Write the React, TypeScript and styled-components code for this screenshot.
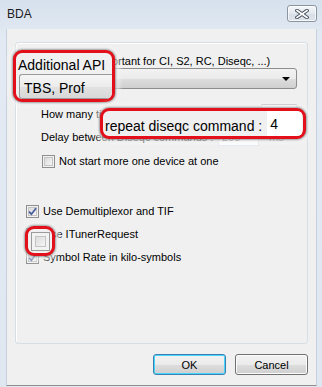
import styled, { createGlobalStyle } from 'styled-components';

const GlobalStyle = createGlobalStyle`
    html, body {
        margin: 0;
        padding: 0;
        background: #dde6f0;
    }
    body {
        font-family: 'Liberation Sans', Arial, sans-serif;
        font-size: 11px;
        color: #000;
    }
`;

function Check({ checked, big }: { checked?: boolean; big?: boolean }) {
    return (
        <CheckBox $big={big}>
            {checked && (
                <svg width="9" height="9" viewBox="0 0 9 9">
                    <path d="M1 4.6 L3.4 7.2 L8 1.2" fill="none" stroke="#4a5e9c" strokeWidth="1.8" />
                </svg>
            )}
        </CheckBox>
    );
}

export default function App() {
    return (
        <>
            <GlobalStyle />
            <Window>
                <TitleBar>
                    <Title>BDA</Title>
                    <CloseButton>
                        <svg width="14" height="10" viewBox="0 0 14 10">
                            <path d="M2 1.5 L12 8.5 M12 1.5 L2 8.5" stroke="#4d5560" strokeWidth="3.6" strokeLinecap="square" />
                            <path d="M2 1.5 L12 8.5 M12 1.5 L2 8.5" stroke="#fff" strokeWidth="1.6" strokeLinecap="square" />
                        </svg>
                    </CloseButton>
                </TitleBar>
                <Body>
                    <GroupBox>
                        <Row $top={11} $indent={0} $h={14}>
                            Additional API (important for CI, S2, RC, Diseqc, ...)
                        </Row>
                        <Combo>
                            <span>TBS, Prof</span>
                            <ComboArrow />
                        </Combo>
                        <Row $top={15} $indent={22} $h={19}>
                            <span>How many times to repeat diseqc command :</span>
                            <TextBox $w={39} $push>
                                4
                            </TextBox>
                        </Row>
                        <Row $top={4} $indent={22} $h={19}>
                            <Caption $w={177}>Delay between Diseqc commands :</Caption>
                            <TextBox $w={41}>200</TextBox>
                            <Unit>ms</Unit>
                        </Row>
                        <Row $top={8} $indent={23} $h={14}>
                            <Check />
                            <CheckText>Not start more one device at one</CheckText>
                        </Row>
                        <Row $top={36} $indent={7} $h={14}>
                            <Check checked />
                            <CheckText>Use Demultiplexor and TIF</CheckText>
                        </Row>
                        <Row $top={9} $indent={7} $h={14}>
                            <Check />
                            <CheckText>Use ITunerRequest</CheckText>
                        </Row>
                        <Row $top={9} $indent={7} $h={14}>
                            <Check checked />
                            <CheckText>Symbol Rate in kilo-symbols</CheckText>
                        </Row>
                    </GroupBox>
                    <ButtonBar>
                        <Button $default>OK</Button>
                        <Button>Cancel</Button>
                    </ButtonBar>
                </Body>

                {/* magnified callouts laid over the dialog */}
                <Callout $x={13} $y={50} $w={102} $h={52} $dir="column">
                    <ZoomText>Additional API</ZoomText>
                    <ZoomCombo>TBS, Prof</ZoomCombo>
                </Callout>
                <Callout $x={100} $y={108} $w={206} $h={31} $dir="row">
                    <ZoomText>repeat diseqc command :</ZoomText>
                    <ZoomInput>4</ZoomInput>
                </Callout>
                <Callout $x={25} $y={226} $w={30} $h={30} $dir="row" $center>
                    <Check big />
                </Callout>
            </Window>
        </>
    );
}

const gradient = 'linear-gradient(#f2f2f2, #ebebeb 50%, #dddddd 51%, #cfcfcf)';

const Window = styled.div`
    position: relative;
    width: 322px;
    height: 387px;
    box-sizing: border-box;
    display: flex;
    flex-direction: column;
    padding: 0 5px 1px 6px;
    background: linear-gradient(#d6e1ed, #e3eaf3 40px, #dfe7f0);
    overflow: hidden;
`;

const TitleBar = styled.div`
    height: 29px;
    display: flex;
    align-items: center;
    justify-content: space-between;
    padding-left: 1px;
    flex-shrink: 0;
`;

const Title = styled.div`
    font-size: 12px;
    color: #1b1b1b;
    margin-top: -1px;
`;

const CloseButton = styled.div`
    width: 28px;
    height: 15px;
    margin-top: -2px;
    border: 1px solid #8b95a1;
    border-radius: 3px;
    background: linear-gradient(#f5f7fa, #e3e8ee 50%, #d6dde6 51%, #dfe5ec);
    display: flex;
    align-items: center;
    justify-content: center;
    box-shadow: inset 0 0 0 1px rgba(255, 255, 255, 0.7);
`;

const Body = styled.div`
    flex: 1;
    background: #f0f0f0;
    border: 1px solid #c5d1de;
    border-top: none;
    border-bottom-color: #8e8e8e;
    display: flex;
    flex-direction: column;
    padding: 13px 8px 0 8px;
`;

const GroupBox = styled.div`
    height: 302px;
    box-sizing: border-box;
    border: 1px solid #d5dfe5;
    border-radius: 3px;
    box-shadow: inset 1px 1px 0 #fff;
    padding: 0 10px 0 3px;
    display: flex;
    flex-direction: column;
`;

const Row = styled.div<{ $top: number; $indent: number; $h: number }>`
    display: flex;
    align-items: center;
    margin-top: ${({ $top }) => $top}px;
    padding-left: ${({ $indent }) => $indent}px;
    height: ${({ $h }) => $h}px;
    white-space: nowrap;
`;

const Caption = styled.span<{ $w: number }>`
    width: ${({ $w }) => $w}px;
    flex-shrink: 0;
`;

const Combo = styled.div`
    height: 21px;
    box-sizing: border-box;
    border: 1px solid #8d8d8d;
    border-radius: 3px;
    background: ${gradient};
    display: flex;
    align-items: center;
    justify-content: space-between;
    padding: 0 6px 0 4px;
`;

const ComboArrow = styled.span`
    width: 0;
    height: 0;
    border-left: 4px solid transparent;
    border-right: 4px solid transparent;
    border-top: 4px solid #000;
`;

const TextBox = styled.div<{ $w: number; $push?: boolean }>`
    width: ${({ $w }) => $w}px;
    height: 19px;
    box-sizing: border-box;
    margin-left: ${({ $push }) => ($push ? 'auto' : '0')};
    border: 1px solid;
    border-color: #abadb3 #dbdfe6 #e3e9ef #e2e3ea;
    background: #fff;
    padding-left: 3px;
    display: flex;
    align-items: center;
    color: #6d6d6d;
`;

const Unit = styled.span`
    margin-left: 10px;
    color: #6d6d6d;
`;

const CheckBox = styled.span<{ $big?: boolean }>`
    width: ${({ $big }) => ($big ? 19 : 13)}px;
    height: ${({ $big }) => ($big ? 19 : 13)}px;
    box-sizing: border-box;
    flex-shrink: 0;
    border: 1px solid ${({ $big }) => ($big ? '#9b9b9b' : '#8e8f8f')};
    background: linear-gradient(135deg, #d2d2d2, #f1f1f1 70%, #ffffff);
    box-shadow: inset 0 0 0 ${({ $big }) => ($big ? 3 : 1)}px #f2f2f2,
        inset 0 0 0 ${({ $big }) => ($big ? 4 : 2)}px #c4c4c4;
    display: flex;
    align-items: center;
    justify-content: center;
`;

const CheckText = styled.span`
    margin-left: 4px;
`;

const ButtonBar = styled.div`
    display: flex;
    justify-content: flex-end;
    gap: 9px;
    margin-top: 10px;
`;

const Button = styled.div<{ $default?: boolean }>`
    width: 73px;
    height: 21px;
    box-sizing: border-box;
    border: 1px solid ${({ $default }) => ($default ? '#3c7fb1' : '#707070')};
    border-radius: 3px;
    background: ${gradient};
    box-shadow: inset 0 0 0 1px ${({ $default }) => ($default ? '#48d6ff' : '#fcfcfc')};
    display: flex;
    align-items: center;
    justify-content: center;
    font-size: 11px;
    color: #000;
`;

const Callout = styled.div<{ $x: number; $y: number; $w: number; $h: number; $dir: string; $center?: boolean }>`
    position: absolute;
    left: ${({ $x }) => $x}px;
    top: ${({ $y }) => $y}px;
    width: ${({ $w }) => $w}px;
    height: ${({ $h }) => $h}px;
    box-sizing: border-box;
    border: 3px solid #e3101b;
    border-radius: 9px;
    background: #f0f0f0;
    overflow: hidden;
    display: flex;
    flex-direction: ${({ $dir }) => $dir};
    align-items: ${({ $center, $dir }) => ($center || $dir === 'row' ? 'center' : 'stretch')};
    justify-content: ${({ $center }) => ($center ? 'center' : 'flex-start')};
    box-shadow: 0 0 2px 1px rgba(0, 0, 0, 0.35), 0 0 4px 5px rgba(242, 242, 242, 0.65);
`;

const ZoomText = styled.div`
    font-size: 14px;
    line-height: 16px;
    color: #000;
    padding: 4px 0 0 2px;
    white-space: nowrap;
    flex-shrink: 0;
`;

const ZoomCombo = styled.div`
    margin: 1px 0 0 3px;
    height: 30px;
    box-sizing: border-box;
    border: 1px solid #9a9a9a;
    border-right: none;
    border-radius: 3px 0 0 3px;
    background: linear-gradient(#f6f6f6, #ececec 50%, #e2e2e2 51%, #d8d8d8);
    padding: 5px 0 0 4px;
    font-size: 14px;
    color: #000;
`;

const ZoomInput = styled.div`
    flex: 1;
    align-self: stretch;
    margin: 0 1px 0 5px;
    background: #fff;
    font-size: 14px;
    display: flex;
    align-items: center;
    padding-left: 3px;
    color: #000;
`;
